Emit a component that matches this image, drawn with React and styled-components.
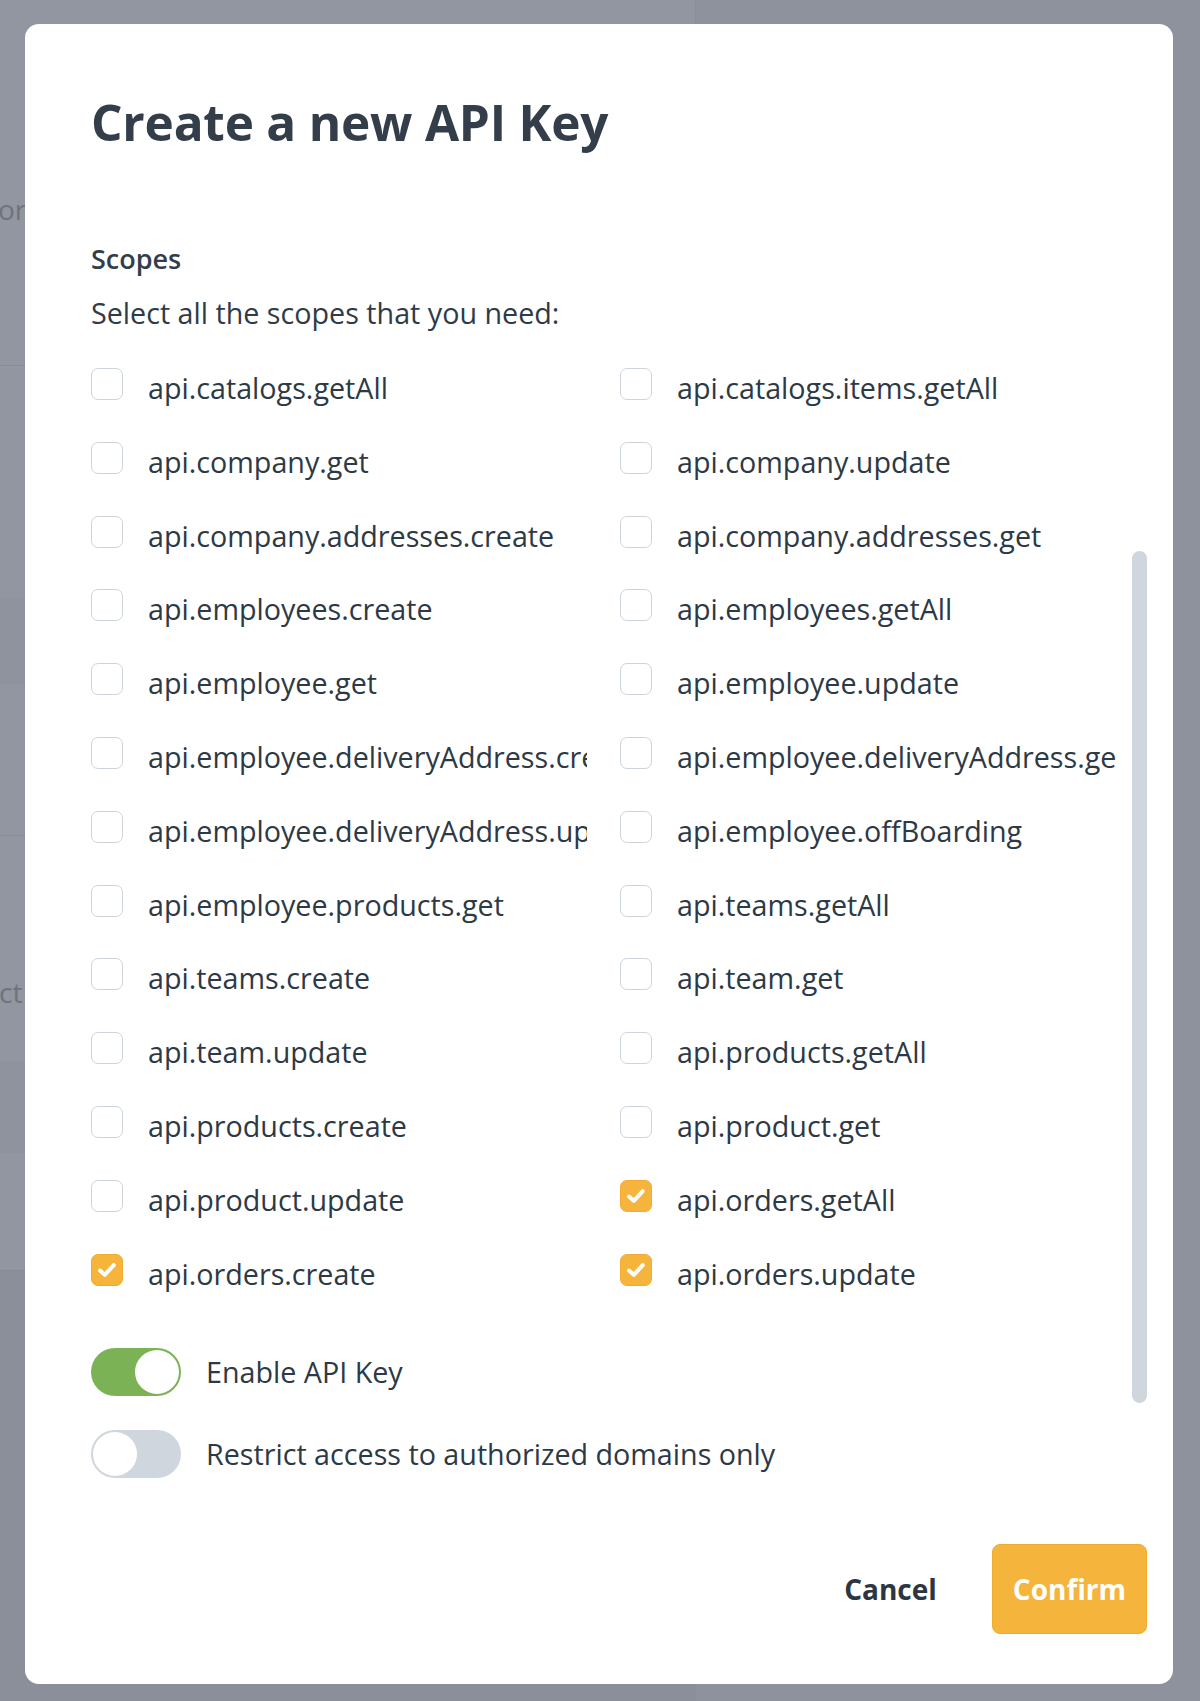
import React from "react";
import styled, { createGlobalStyle } from "styled-components";

const GlobalStyle = createGlobalStyle`
  html, body { margin: 0; padding: 0; background: #8e929c; }
  body { font-family: "Open Sans", "Noto Sans", sans-serif; -webkit-font-smoothing: antialiased; }
  * { box-sizing: border-box; }
`;

const Screen = styled.div`
  position: relative;
  width: 1200px;
  height: 1701px;
  overflow: hidden;
`;

const Backdrop = styled.div`
  display: grid;
  grid-template-columns: 696px 1fr;
  height: 100%;
`;

const LeftPane = styled.div`
  display: flex;
  flex-direction: column;
  background: #9196a0;
  border-right: 1px solid #8a8e98;
`;

const RightPane = styled.div`
  background: #8e929c;
`;

const PaneSection = styled.div`
  height: ${(p) => p.$h}px;
  border-bottom: 1px solid #868b95;
  display: flex;
  flex-direction: column;
`;

const PaneText = styled.div`
  margin-top: ${(p) => p.$top}px;
  margin-left: ${(p) => p.$left}px;
  font-size: 28px;
  line-height: 30px;
  color: #6e737d;
  white-space: nowrap;
`;

const PaneShade = styled.div`
  margin-top: ${(p) => p.$top}px;
  height: ${(p) => p.$h}px;
  background: #8e939d;
`;

const PaneRest = styled.div`
  flex: 1;
  background: #8b8f9a;
`;

const Modal = styled.div`
  position: absolute;
  top: 24px;
  left: 25px;
  width: 1148px;
  background: #ffffff;
  border-radius: 14px;
  padding: 68px 26px 50px 66px;
  display: flex;
  flex-direction: column;
  color: #2f3b47;
`;

const Title = styled.h1`
  margin: 0;
  font-size: 49.5px;
  line-height: 60px;
  font-weight: 700;
  color: #333e4a;
  letter-spacing: -0.2px;
`;

const Body = styled.div`
  margin-top: 89px;
  display: flex;
  gap: 15px;
`;

const Content = styled.div`
  flex: 1;
  min-width: 0;
  display: flex;
  flex-direction: column;
`;

const SectionTitle = styled.h2`
  margin: 0;
  font-size: 27px;
  line-height: 36px;
  font-weight: 600;
  color: #333e4a;
`;

const Hint = styled.p`
  margin: 16px 0 0;
  font-size: 28.7px;
  line-height: 40px;
  color: #2f3b47;
`;

const ScopeGrid = styled.div`
  margin-top: 35px;
  display: grid;
  grid-template-columns: 496px 496px;
  column-gap: 33px;
  row-gap: 33.8px;
`;

const ScopeRow = styled.label`
  display: flex;
  align-items: flex-start;
  gap: 25px;
  min-width: 0;
  height: 40px;
`;

const Box = styled.span`
  flex: 0 0 32px;
  width: 32px;
  height: 32px;
  border-radius: 7px;
  display: flex;
  align-items: center;
  justify-content: center;
  border: 1.5px solid ${(p) => (p.$checked ? "#f2ab2e" : "#cdd4dc")};
  background: ${(p) => (p.$checked ? "#f5b43c" : "#ffffff")};
`;

const ScopeLabel = styled.span`
  flex: 1;
  min-width: 0;
  font-size: 28.7px;
  line-height: 40px;
  color: #2d3945;
  white-space: nowrap;
  overflow: hidden;
`;

const ToggleList = styled.div`
  margin-top: 54px;
  display: flex;
  flex-direction: column;
  gap: 34px;
`;

const ToggleRow = styled.div`
  display: flex;
  align-items: center;
  gap: 25px;
`;

const Track = styled.span`
  flex: 0 0 90px;
  width: 90px;
  height: 48px;
  border-radius: 24px;
  padding: 2px;
  display: flex;
  justify-content: ${(p) => (p.$on ? "flex-end" : "flex-start")};
  background: ${(p) => (p.$on ? "#7bb255" : "#d0d6dd")};
`;

const Knob = styled.span`
  width: 44px;
  height: 44px;
  border-radius: 50%;
  background: #ffffff;
`;

const ToggleLabel = styled.span`
  font-size: 28.7px;
  line-height: 40px;
  color: #2d3945;
`;

const ScrollTrack = styled.div`
  flex: 0 0 15px;
  padding-top: 310px;
`;

const Thumb = styled.div`
  width: 15px;
  height: 852px;
  border-radius: 8px;
  background: #cfd6dd;
`;

const Footer = styled.div`
  margin-top: 66px;
  display: flex;
  justify-content: flex-end;
  align-items: center;
  gap: 55px;
`;

const TextButton = styled.button`
  border: 0;
  background: transparent;
  padding: 0;
  font-family: inherit;
  font-size: 28px;
  line-height: 40px;
  font-weight: 700;
  color: #2b3642;
`;

const PrimaryButton = styled.button`
  height: 90px;
  padding: 0 20px;
  border: 1px solid #f1ab2d;
  border-radius: 8px;
  background: #f5b43c;
  font-family: inherit;
  font-size: 28px;
  line-height: 40px;
  font-weight: 700;
  color: #ffffff;
`;

const Check = () => (
  <svg width="24" height="24" viewBox="0 0 24 24" fill="none">
    <path d="M5 12.5 L9.8 16.8 L18.8 7.2" stroke="#ffffff" strokeWidth="4" strokeLinecap="round" strokeLinejoin="round" />
  </svg>
);

const scopes = [
  ["api.catalogs.getAll", false], ["api.catalogs.items.getAll", false],
  ["api.company.get", false], ["api.company.update", false],
  ["api.company.addresses.create", false], ["api.company.addresses.get", false],
  ["api.employees.create", false], ["api.employees.getAll", false],
  ["api.employee.get", false], ["api.employee.update", false],
  ["api.employee.deliveryAddress.create", false], ["api.employee.deliveryAddress.get", false],
  ["api.employee.deliveryAddress.update", false], ["api.employee.offBoarding", false],
  ["api.employee.products.get", false], ["api.teams.getAll", false],
  ["api.teams.create", false], ["api.team.get", false],
  ["api.team.update", false], ["api.products.getAll", false],
  ["api.products.create", false], ["api.product.get", false],
  ["api.product.update", false], ["api.orders.getAll", true],
  ["api.orders.create", true], ["api.orders.update", true],
];

export default function App() {
  return (
    <>
      <GlobalStyle />
      <Screen>
        <Backdrop>
          <LeftPane>
            <PaneSection $h={366}>
              <PaneText $top={194} $left={-2}>orm</PaneText>
            </PaneSection>
            <PaneSection $h={470}>
              <PaneShade $top={232} $h={86} />
            </PaneSection>
            <PaneSection $h={435}>
              <PaneText $top={141} $left={-1}>ct</PaneText>
              <PaneShade $top={54} $h={92} />
            </PaneSection>
            <PaneRest />
          </LeftPane>
          <RightPane />
        </Backdrop>
        <Modal>
          <Title>Create a new API Key</Title>
          <Body>
            <Content>
              <SectionTitle>Scopes</SectionTitle>
              <Hint>Select all the scopes that you need:</Hint>
              <ScopeGrid>
                {scopes.map(([name, checked]) => (
                  <ScopeRow key={name}>
                    <Box $checked={checked}>{checked && <Check />}</Box>
                    <ScopeLabel>{name}</ScopeLabel>
                  </ScopeRow>
                ))}
              </ScopeGrid>
              <ToggleList>
                <ToggleRow>
                  <Track $on><Knob /></Track>
                  <ToggleLabel>Enable API Key</ToggleLabel>
                </ToggleRow>
                <ToggleRow>
                  <Track><Knob /></Track>
                  <ToggleLabel>Restrict access to authorized domains only</ToggleLabel>
                </ToggleRow>
              </ToggleList>
            </Content>
            <ScrollTrack>
              <Thumb />
            </ScrollTrack>
          </Body>
          <Footer>
            <TextButton>Cancel</TextButton>
            <PrimaryButton>Confirm</PrimaryButton>
          </Footer>
        </Modal>
      </Screen>
    </>
  );
}
